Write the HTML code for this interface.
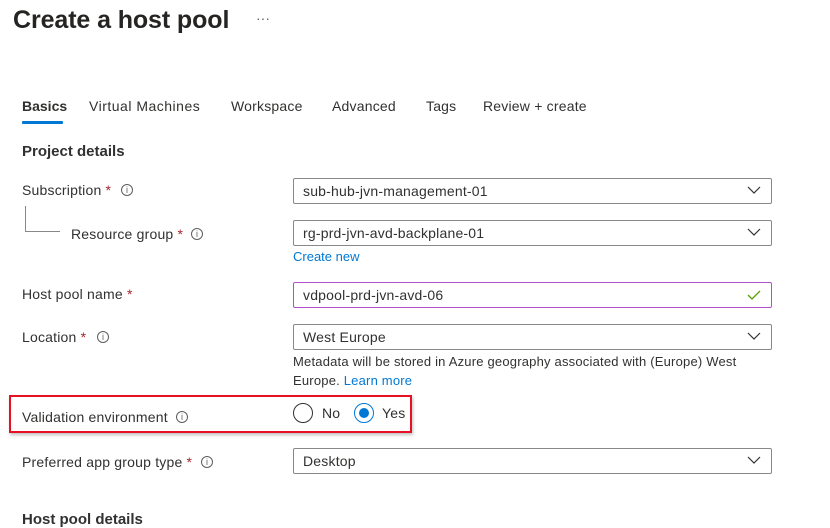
<!DOCTYPE html>
<html><head><style>
*{margin:0;padding:0;box-sizing:border-box}
body{width:830px;height:516px;overflow:hidden;background:#fff;font-family:"Liberation Sans",sans-serif;color:#323130;position:relative}
.a{position:absolute;white-space:nowrap}
.t{font-size:14px;letter-spacing:0.2px}
.star{color:#a4262c}
.info{display:inline-block;width:12px;height:12px;border:1px solid #605e5c;border-radius:50%;position:absolute;font-size:9px;text-align:center;line-height:10px;color:#605e5c}
.box{position:absolute;left:293px;width:479px;height:26px;border:1px solid #8a8886;border-radius:2px;font-size:14px;padding-left:9px;line-height:24px;letter-spacing:0.2px}
.chev{position:absolute;right:10px;top:6px}
.link{color:#0078d4}
</style></head><body>
<div class="a" style="left:13px;top:6px;font-size:25px;font-weight:bold;color:#252423;letter-spacing:-0.1px">Create a host pool</div>
<div class="a" style="left:256px;top:10px;font-size:14px;color:#605e5c">···</div>

<div class="a t" style="left:22px;top:98px;font-weight:bold;letter-spacing:0">Basics</div>
<div style="position:absolute;left:22px;top:121px;width:41px;height:3px;background:#0078d4;border-radius:1px"></div>
<div class="a t" style="left:89px;top:98px;letter-spacing:0.5px">Virtual Machines</div>
<div class="a t" style="left:231px;top:98px">Workspace</div>
<div class="a t" style="left:332px;top:98px">Advanced</div>
<div class="a t" style="left:426px;top:98px">Tags</div>
<div class="a t" style="left:483px;top:98px">Review + create</div>

<div class="a" style="left:22px;top:143px;font-size:15px;font-weight:bold">Project details</div>

<div class="a t" style="left:22px;top:182px">Subscription <span class="star">*</span></div>
<span class="info" style="left:121px;top:184px">i</span>
<div style="position:absolute;left:25px;top:206px;width:1px;height:25px;background:#8a8886"></div>
<div style="position:absolute;left:25px;top:231px;width:35px;height:1px;background:#8a8886"></div>
<div class="a t" style="left:71px;top:226px">Resource group <span class="star">*</span></div>
<span class="info" style="left:191px;top:228px">i</span>

<div class="box" style="top:178px">sub-hub-jvn-management-01<svg class="chev" width="14" height="10" viewBox="0 0 14 10"><path d="M1 2l6 6 6-6" fill="none" stroke="#323130" stroke-width="1.2"/></svg></div>
<div class="box" style="top:220px">rg-prd-jvn-avd-backplane-01<svg class="chev" width="14" height="10" viewBox="0 0 14 10"><path d="M1 2l6 6 6-6" fill="none" stroke="#323130" stroke-width="1.2"/></svg></div>
<div class="a link" style="left:293px;top:249px;font-size:13px">Create new</div>

<div class="a t" style="left:22px;top:286px">Host pool name <span class="star">*</span></div>
<div class="box" style="top:282px;border-color:#b150c8">vdpool-prd-jvn-avd-06<svg class="chev" style="top:7px" width="14" height="10" viewBox="0 0 14 10"><path d="M1 5l4 4 8-8" fill="none" stroke="#57a300" stroke-width="1.3"/></svg></div>

<div class="a t" style="left:22px;top:329px">Location <span class="star">*</span></div>
<span class="info" style="left:97px;top:331px">i</span>
<div class="box" style="top:324px">West Europe<svg class="chev" width="14" height="10" viewBox="0 0 14 10"><path d="M1 2l6 6 6-6" fill="none" stroke="#323130" stroke-width="1.2"/></svg></div>
<div class="a" style="left:293px;top:352px;font-size:13px;line-height:19px;letter-spacing:0.2px">Metadata will be stored in Azure geography associated with (Europe) West<br>Europe. <span class="link">Learn more</span></div>

<div style="position:absolute;left:9px;top:395px;width:403px;height:38px;border:2px solid #e81123;box-shadow:1px 2px 3px rgba(0,0,0,.25)"></div>
<div class="a t" style="left:22px;top:409px">Validation environment</div>
<span class="info" style="left:176px;top:411px">i</span>
<div style="position:absolute;left:293px;top:403px;width:20px;height:20px;border:1px solid #323130;border-radius:50%"></div>
<div class="a t" style="left:322px;top:405px">No</div>
<div style="position:absolute;left:354px;top:403px;width:20px;height:20px;border:1px solid #0078d4;border-radius:50%"></div>
<div style="position:absolute;left:359px;top:408px;width:10px;height:10px;background:#0078d4;border-radius:50%"></div>
<div class="a t" style="left:382px;top:405px">Yes</div>

<div class="a t" style="left:22px;top:454px">Preferred app group type <span class="star">*</span></div>
<span class="info" style="left:201px;top:456px">i</span>
<div class="box" style="top:448px">Desktop<svg class="chev" width="14" height="10" viewBox="0 0 14 10"><path d="M1 2l6 6 6-6" fill="none" stroke="#323130" stroke-width="1.2"/></svg></div>

<div class="a" style="left:22px;top:511px;font-size:15px;font-weight:bold">Host pool details</div>
</body></html>
